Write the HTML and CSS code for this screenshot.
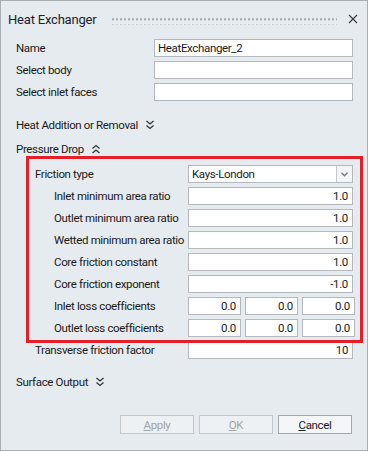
FILE: index.html
```html
<!DOCTYPE html>
<html lang="en">
<head>
    <meta charset="utf-8">
    <meta name="viewport" content="width=device-width, initial-scale=1.0">
    <title>Heat Exchanger</title>
    <link rel="stylesheet" href="styles.css">
</head>
<body>

    <div class="window">
        <div class="titlebar">
            <span class="title">Heat Exchanger</span>
            <span class="grip"></span>
            <svg class="close" width="10" height="10" viewBox="0 0 10 10">
                <path d="M1 1 L9 9 M9 1 L1 9" stroke="#3a3a3a" stroke-width="1.1" fill="none"/>
            </svg>
        </div>

        <div class="form">
            <div class="row">
                <label class="lbl">Name</label>
                <input class="field wide" type="text" value="HeatExchanger_2">
            </div>
            <div class="row">
                <label class="lbl">Select body</label>
                <input class="field wide" type="text">
            </div>
            <div class="row">
                <label class="lbl">Select inlet faces</label>
                <input class="field wide" type="text">
            </div>

            <div class="section first">
                Heat Addition or Removal
                <svg class="chev" width="8" height="10" viewBox="0 0 8 10">
                    <path d="M0.5 1 L4 4 L7.5 1 M0.5 5.5 L4 8.5 L7.5 5.5" stroke="#333" stroke-width="1.3" fill="none"/>
                </svg>
            </div>
            <div class="section">
                Pressure Drop
                <svg class="chev" width="8" height="10" viewBox="0 0 8 10">
                    <path d="M0.5 4.5 L4 1.5 L7.5 4.5 M0.5 9 L4 6 L7.5 9" stroke="#333" stroke-width="1.3" fill="none"/>
                </svg>
            </div>

            <div class="group">
                <div class="row">
                    <label class="lbl indent">Friction type</label>
                    <div class="select">
                        <span class="select-text">Kays-London</span>
                        <span class="select-btn">
                            <svg width="7" height="5" viewBox="0 0 7 5">
                                <path d="M0.5 0.8 L3.5 3.8 L6.5 0.8" stroke="#777" stroke-width="1.4" fill="none"/>
                            </svg>
                        </span>
                    </div>
                </div>
                <div class="row">
                    <label class="lbl sub">Inlet minimum area ratio</label>
                    <input class="field num" type="text" value="1.0">
                </div>
                <div class="row">
                    <label class="lbl sub">Outlet minimum area ratio</label>
                    <input class="field num" type="text" value="1.0">
                </div>
                <div class="row">
                    <label class="lbl sub">Wetted minimum area ratio</label>
                    <input class="field num" type="text" value="1.0">
                </div>
                <div class="row">
                    <label class="lbl sub">Core friction constant</label>
                    <input class="field num" type="text" value="1.0">
                </div>
                <div class="row">
                    <label class="lbl sub">Core friction exponent</label>
                    <input class="field num" type="text" value="-1.0">
                </div>
                <div class="row">
                    <label class="lbl sub">Inlet loss coefficients</label>
                    <div class="triple">
                        <input class="field num" type="text" value="0.0">
                        <input class="field num" type="text" value="0.0">
                        <input class="field num" type="text" value="0.0">
                    </div>
                </div>
                <div class="row">
                    <label class="lbl sub">Outlet loss coefficients</label>
                    <div class="triple">
                        <input class="field num" type="text" value="0.0">
                        <input class="field num" type="text" value="0.0">
                        <input class="field num" type="text" value="0.0">
                    </div>
                </div>
                <div class="highlight"></div>
            </div>

            <div class="row">
                <label class="lbl indent">Transverse friction factor</label>
                <input class="field num" type="text" value="10">
            </div>

            <div class="section output">
                Surface Output
                <svg class="chev" width="8" height="10" viewBox="0 0 8 10">
                    <path d="M0.5 1 L4 4 L7.5 1 M0.5 5.5 L4 8.5 L7.5 5.5" stroke="#333" stroke-width="1.3" fill="none"/>
                </svg>
            </div>
        </div>

        <div class="buttons">
            <button class="btn" disabled><u>A</u>pply</button>
            <button class="btn" disabled><u>O</u>K</button>
            <button class="btn active"><u>C</u>ancel</button>
        </div>
    </div>

</body>
</html>
```

FILE: styles.css
```css
body {
    margin: 0;
    padding: 0;
    font-family: Roboto, "Liberation Sans", Arial, sans-serif;
    font-size: 11.5px;
    letter-spacing: -0.35px;
    color: #1a1a1a;
}
.window {
    width: 368px;
    height: 451px;
    box-sizing: border-box;
    border: 1px solid #a9aeb3;
    background: #e5ebef;
    position: relative;
}
.titlebar {
    display: flex;
    align-items: center;
    height: 36px;
    padding: 0 9px 0 7px;
}
.title {
    font-size: 13px;
    letter-spacing: -0.2px;
    color: #1c1c34;
}
.grip {
    flex: 1;
    height: 9px;
    margin: 0 11px 0 15px;
    background-image: radial-gradient(circle, #9a9ea3 0.9px, transparent 1.2px);
    background-size: 4px 6.5px;
    background-position: 0 0;
    position: relative;
    top: 1px;
}
.close {
    display: block;
}
.form {
    padding: 2px 14px 0 15px;
}
.row {
    display: flex;
    align-items: center;
    height: 18px;
    margin-bottom: 4px;
}
.lbl {
    flex: 1;
    min-width: 0;
    white-space: nowrap;
}
.lbl.indent {
    padding-left: 19px;
}
.lbl.sub {
    padding-left: 38px;
}
.field {
    flex-shrink: 0;
    height: 18px;
    box-sizing: border-box;
    border: 1px solid #b4b8bc;
    background: white;
    font-family: Roboto, "Liberation Sans", Arial, sans-serif;
    font-size: 11.5px;
    letter-spacing: -0.35px;
    color: #1a1a1a;
    padding: 0 3px;
    margin: 0;
    outline: none;
}
.field.wide {
    width: 199px;
}
.field.num {
    width: 165px;
    text-align: right;
    padding-right: 4px;
}
.triple {
    flex-shrink: 0;
    display: flex;
    gap: 4px;
    width: 165px;
}
.triple .field.num {
    width: 53px;
}
.select {
    flex-shrink: 0;
    width: 165px;
    height: 18px;
    box-sizing: border-box;
    display: flex;
    border: 1px solid #b4b8bc;
    background: white;
}
.select-text {
    flex: 1;
    padding-left: 3px;
    line-height: 16px;
}
.select-btn {
    width: 15px;
    border-left: 1px solid #c4c8cc;
    background: #f2f4f6;
    display: flex;
    align-items: center;
    justify-content: center;
}
.section {
    display: flex;
    align-items: center;
    height: 24px;
}
.section.first {
    margin-top: 12px;
}
.chev {
    margin-left: 8px;
}
.group {
    position: relative;
    margin-top: 4px;
}
.highlight {
    position: absolute;
    left: 10px;
    right: -10px;
    top: -9px;
    bottom: -6px;
    border: 3px solid #e3202a;
    pointer-events: none;
}
.section.output {
    margin-top: 11px;
}
.buttons {
    position: absolute;
    right: 15px;
    top: 414px;
    display: flex;
    gap: 5px;
}
.btn {
    width: 74px;
    height: 19px;
    box-sizing: border-box;
    border: 1px solid #c3c7cb;
    background: #eef1f3;
    font-family: Roboto, "Liberation Sans", Arial, sans-serif;
    font-size: 11.5px;
    letter-spacing: -0.35px;
    color: #a0a4a8;
    padding: 0;
}
.btn.active {
    border-color: #a4a8ac;
    background: #f4f6f7;
    color: #1a1a1a;
}
```
